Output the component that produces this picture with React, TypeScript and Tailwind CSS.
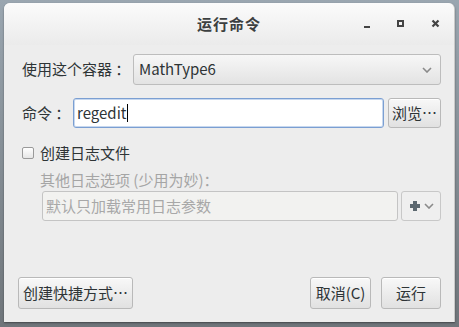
import React from 'react';

const font = { fontFamily: '"Noto Sans CJK SC", "DejaVu Sans", sans-serif' };

function Chevron({ className = '' }: { className?: string }) {
  return (
    <svg width="10" height="6" viewBox="0 0 10 6" className={className}>
      <path d="M1 1 L5 5 L9 1" fill="none" stroke="#8a8a8a" strokeWidth="1.6" />
    </svg>
  );
}

const btn =
  'flex items-center justify-center rounded-[3px] border border-[#b9b9b9] bg-gradient-to-b from-[#f8f8f8] to-[#e1e1e1] text-[15px] text-[#2e3436] shadow-[inset_0_1px_0_#ffffff]';

export default function App() {
  return (
    <div className="h-[327px] w-[459px] overflow-hidden bg-[#5b5f63] bg-gradient-to-b from-[#9aa6b0] to-[#6f757a] pl-[4px] pt-[3px]" style={font}>
      <div className="flex h-[319px] w-[451px] flex-col rounded-t-[6px] border-r border-[#c9c9c9] bg-[#ededed] shadow-[0_1px_2px_rgba(0,0,0,0.4)]">
        {/* title bar */}
        <div className="relative flex h-[42px] items-center justify-center rounded-t-[6px] bg-gradient-to-b from-[#fbfbfb] to-[#ebebeb]">
          <span className="text-[15px] font-bold tracking-[1px] text-[#3c3f40]">运行命令</span>
          <div className="absolute right-[14px] top-[16px] flex items-center gap-[27px]">
            <div className="mt-[6px] h-[2px] w-[6px] bg-[#444]" />
            <div className="h-[7px] w-[7px] border-2 border-[#444]" />
            <svg width="9" height="9" viewBox="0 0 9 9">
              <path d="M1.5 1.5 L7.5 7.5 M7.5 1.5 L1.5 7.5" stroke="#444" strokeWidth="2.2" />
            </svg>
          </div>
        </div>

        <div className="flex flex-1 flex-col pl-[14px] pr-[13px]">
          {/* container row */}
          <div className="mt-[9px] flex h-[31px] items-center">
            <span className="w-[115px] pl-[4px] text-[15px] text-[#2e3436]">使用这个容器 ：</span>
            <div className="flex h-full flex-1 items-center justify-between rounded-[3px] border border-[#bdbdbd] bg-gradient-to-b from-[#f7f7f7] to-[#e3e3e3] pl-[5px] pr-[8px] text-[15px] text-[#2e3436]">
              <span>MathType6</span>
              <Chevron />
            </div>
          </div>

          {/* command row */}
          <div className="mt-[13px] flex h-[30px] items-center">
            <span className="w-[55px] pl-[4px] text-[15px] text-[#2e3436]">命令 ：</span>
            <div className="flex h-full flex-1 items-center rounded-[3px] border border-[#7b9fd2] bg-white pl-[3px] text-[15px] text-[#2e3436] shadow-[inset_0_0_0_1px_#c7d8ef]">
              <span>regedit</span>
              <div className="ml-[1px] h-[18px] w-[1px] bg-black" />
            </div>
            <div className={`${btn} ml-[4px] h-full w-[53px]`}>浏览…</div>
          </div>

          {/* log checkbox */}
          <div className="mt-[17px] flex h-[16px] items-center pl-[4px]">
            <div className="h-[12px] w-[12px] rounded-[2px] border border-[#9a9a9a] bg-gradient-to-b from-white to-[#e6e6e6]" />
            <span className="ml-[6px] text-[15px] text-[#2e3436]">创建日志文件</span>
          </div>

          <div className="mt-[10px] pl-[22px] text-[15px] leading-[18px] text-[#a5a5a5]">其他日志选项 (少用为妙)：</div>

          <div className="ml-[24px] mt-[2px] flex h-[30px]">
            <div className="flex flex-1 items-center rounded-[3px] border border-[#c4c4c4] bg-[#f2f2f0] pl-[3px] text-[15px] text-[#a8a8a8]">
              默认只加载常用日志参数
            </div>
            <div className="ml-[3px] flex w-[40px] items-center justify-center gap-[3px] rounded-[3px] border border-[#c8c8c8] bg-[#efefef]">
              <svg width="12" height="12" viewBox="0 0 12 12">
                <path d="M6 1 V11 M1 6 H11" stroke="#5c6870" strokeWidth="4" />
              </svg>
              <Chevron />
            </div>
          </div>

          <div className="flex-1" />

          {/* bottom buttons */}
          <div className="mb-[13px] flex h-[32px] items-stretch">
            <div className={`${btn} w-[115px]`}>创建快捷方式…</div>
            <div className="flex-1" />
            <div className={`${btn} w-[61px]`}>取消(C)</div>
            <div className={`${btn} ml-[10px] w-[60px]`}>运行</div>
          </div>
        </div>
      </div>
    </div>
  );
}
